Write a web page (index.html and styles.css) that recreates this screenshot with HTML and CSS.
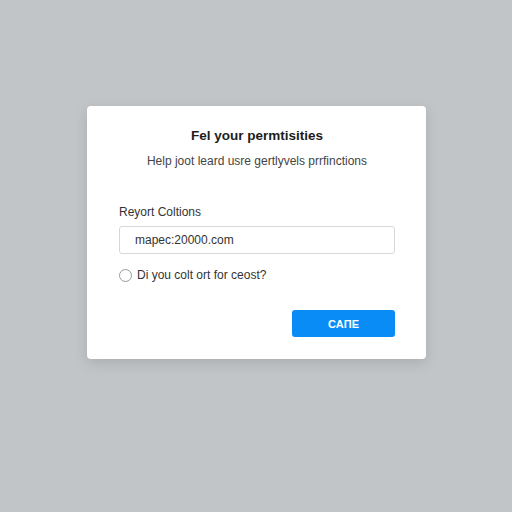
FILE: index.html
```html
<!DOCTYPE html>
<html>
<head>
<meta charset="utf-8">
<link rel="stylesheet" href="styles.css">
</head>
<body>
<div class="page">
  <div class="card">
    <h1 class="title">Fel your permtisities</h1>
    <p class="subtitle">Help joot leard usre gertlyvels prrfinctions</p>
    <label class="label">Reyort Coltions</label>
    <div class="input">mapec:20000.com</div>
    <div class="radio-row">
      <span class="radio"></span>
      <span class="radio-text">Di you colt ort for ceost?</span>
    </div>
    <div class="actions">
      <button class="btn">CAПE</button>
    </div>
  </div>
</div>
</body>
</html>
```
FILE: styles.css
```css
html, body {
  margin: 0;
  padding: 0;
  width: 512px;
  height: 512px;
  background: #c1c5c8;
  font-family: "Liberation Sans", Arial, sans-serif;
}
.page {
  padding-top: 106px;
  padding-left: 87px;
}
.card {
  width: 339px;
  height: 253px;
  box-sizing: border-box;
  background: #ffffff;
  border-radius: 4px;
  box-shadow: 0 4px 14px rgba(0,0,0,0.12);
  padding: 0 31px 0 32px;
  display: flex;
  flex-direction: column;
}
.title {
  margin: 20px 0 0 0;
  font-size: 13.5px;
  font-weight: 700;
  color: #1c1c1c;
  text-align: center;
  line-height: 20px;
}
.subtitle {
  margin: 7px 0 0 0;
  font-size: 12px;
  color: #444;
  text-align: center;
  line-height: 16px;
}
.label {
  margin-top: 35px;
  font-size: 12px;
  color: #333;
  line-height: 16px;
}
.input {
  margin-top: 6px;
  height: 28px;
  box-sizing: border-box;
  border: 1px solid #d8d8d8;
  border-radius: 3px;
  padding-left: 15px;
  font-size: 12px;
  color: #333;
  line-height: 26px;
}
.radio-row {
  margin-top: 13px;
  display: flex;
  align-items: center;
  gap: 5px;
  height: 16px;
}
.radio {
  width: 11px;
  height: 11px;
  border: 1px solid #9a9a9a;
  border-radius: 50%;
}
.radio-text {
  font-size: 12px;
  color: #333;
  line-height: 16px;
}
.actions {
  margin-top: 27px;
  display: flex;
  justify-content: flex-end;
}
.btn {
  width: 103px;
  height: 27px;
  border: none;
  border-radius: 3px;
  background: #0a8cf7;
  color: #fff;
  font-family: "Liberation Sans", Arial, sans-serif;
  font-size: 11px;
  font-weight: 700;
  padding: 0;
}
```
